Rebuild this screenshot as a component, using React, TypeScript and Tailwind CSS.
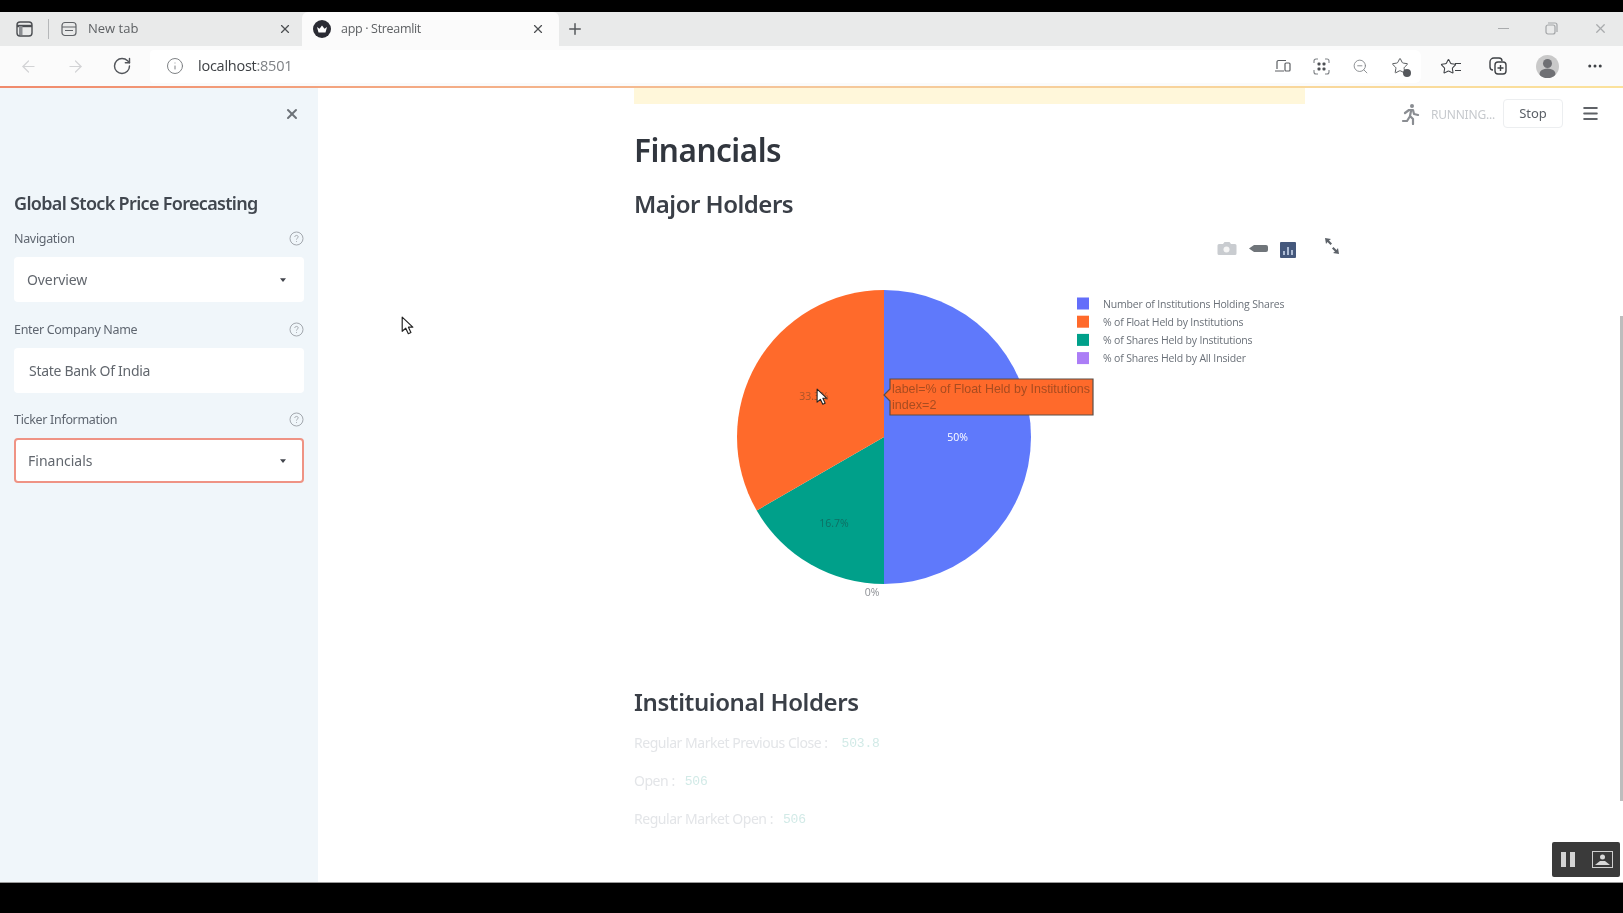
import React from "react";
import { X, Plus, ArrowLeft, ArrowRight, RotateCw, Info, ZoomOut, MoreHorizontal, Menu, Star } from "lucide-react";

const sans = "font-['Noto_Sans','Open_Sans',sans-serif]";

function Help() {
  return (
    <svg width="15" height="15" viewBox="0 0 15 15" fill="none" stroke="#a3a8ae" strokeWidth="1">
      <circle cx="7.5" cy="7.5" r="6.5" />
      <path d="M5.8 6c0-1 .8-1.6 1.7-1.6S9.2 5 9.2 5.9c0 1.2-1.7 1.3-1.7 2.6M7.5 10v.8" />
    </svg>
  );
}

function Caret() {
  return (
    <svg width="6" height="4" viewBox="0 0 8 5" className="shrink-0">
      <path d="M0 0h8L4 5z" fill="#42454c" />
    </svg>
  );
}

function Label({ text }: { text: string }) {
  return (
    <div className="flex items-center justify-between h-5">
      <span className="relative top-[1px] text-[12.5px] text-[#5f6670] tracking-[-0.32px]">{text}</span>
      <Help />
    </div>
  );
}

function Cursor({ className, size }: { className: string; size: number }) {
  return (
    <svg className={className} width={size} height={size * 1.45} viewBox="0 0 11 16">
      <path d="M1 1v12l3-2.6L6.2 15l2.2-1-2.1-4.5H10z" fill="#fff" stroke="#222" strokeWidth="1" strokeLinejoin="round" />
    </svg>
  );
}

function Chart() {
  const legend = [
    ["#636efa", "Number of Institutions Holding Shares"],
    ["#ff6a2b", "% of Float Held by Institutions"],
    ["#00a08a", "% of Shares Held by Institutions"],
    ["#ab7df6", "% of Shares Held by All Insider"],
  ];
  return (
    <svg width="720" height="400" viewBox="0 0 720 400" className="mt-2 block">
      <path d="M250 207V60A147 147 0 0 1 250 354Z" fill="#5f79fb" />
      <path d="M250 207V354A147 147 0 0 1 122.7 280.5Z" fill="#00a08a" />
      <path d="M250 207L122.7 280.5A147 147 0 0 1 250 60Z" fill="#ff6a2b" />
      <g fontFamily="'Open Sans',sans-serif" fontSize="10.5" textAnchor="middle">
        <text x="323.500" y="211" fill="#ffffff">50%</text>
        <text x="200" y="296.500" fill="#0e6f64">16.7%</text>
        <text x="180" y="170" fill="#a8542a">33.3%</text>
        <text x="238" y="366" fill="#8c8f94">0%</text>
      </g>
      {legend.map(([c, t], i) => (
        <g key={t}>
          <rect x="443" y={67.500 + i * 18.2} width="12" height="12" fill={c} />
          <text x="469" y={77.500 + i * 18.2} fontFamily="'Open Sans',sans-serif" fontSize="10.5" letterSpacing="-0.17" fill="#6a7078">{t}</text>
        </g>
      ))}
      {/* tooltip */}
      <path d="M256 149H459V185H256V171L250 165L256 159Z" fill="#ff6a2b" stroke="#5c4e46" strokeWidth="1.200" />
      <g fontFamily="'Liberation Sans',sans-serif" fontSize="12.6" fill="#a94c20">
        <text x="258" y="163" textLength="198" lengthAdjust="spacingAndGlyphs">label=% of Float Held by Institutions</text>
        <text x="258" y="179">index=2</text>
      </g>
      {/* modebar */}
      <g fill="#c9ccd0">
        <path d="M586 14h4l1.500-2h5l1.500 2h4a1.500 1.500 0 0 1 1.500 1.500v8a1.500 1.500 0 0 1-1.500 1.500h-16a1.500 1.500 0 0 1-1.500-1.500v-8a1.500 1.500 0 0 1 1.500-1.500z" transform="translate(-1 0)" />
        <circle cx="592.500" cy="19.500" r="3" fill="#f5f5f5" />
      </g>
      <path d="M620 15h12a2 2 0 0 1 2 2v3a2 2 0 0 1-2 2h-12l-5-3.500z" fill="#70757a" />
      <rect x="646" y="12" width="16" height="16" rx="1" fill="#45587c" />
      <path d="M649 25v-4h2v4zM653 25v-8h2v8zM657 25v-5h2v5z" fill="#aebcd4" />
      <path d="M691 8l6 1-2 1.500 3 3-1.500 1.500-3-3L692 14zM705 24l-6-1 2-1.500-3-3 1.500-1.500 3 3 1.500-2z" fill="#5d6269" />
    </svg>
  );
}

function Info2() {
  return (
    <div className="mt-[12px] flex flex-col gap-[16px] text-[14px] leading-[22px] text-[#e3e5e8] tracking-[-0.46px]">
      {[
        ["Regular Market Previous Close :", "503.8", "gap-[14px]"],
        ["Open :", "506", "gap-[10px]"],
        ["Regular Market Open :", "506", "gap-[10px]"],
      ].map(([a, b, g]) => (
        <div key={a} className={`flex items-center ${g}`}>
          <span>{a}</span>
          <span className="relative top-[1px] font-['Liberation_Mono',monospace] text-[13px] tracking-[-0.2px] text-[#d2eae7]">{b}</span>
        </div>
      ))}
    </div>
  );
}

export default function App() {
  return (
    <div className={`relative flex h-screen w-full flex-col overflow-hidden bg-black blur-[0.6px] ${sans}`}>
      <div className="h-3 shrink-0 bg-black" />

      {/* tab strip */}
      <div className="flex h-[34px] shrink-0 items-stretch bg-[#e9eaea] font-['Open_Sans',sans-serif]">
        <div className="flex w-[48px] items-center justify-center">
          <svg width="17" height="16" viewBox="0 0 17 16" fill="none" stroke="#4b4e52" strokeWidth="1.4">
            <rect x="1" y="1" width="15" height="14" rx="3" />
            <path d="M1 5h15" strokeWidth="2.4" />
            <rect x="3" y="5" width="3.500" height="9" fill="#8b8e92" stroke="none" />
          </svg>
        </div>
        <div className="my-[7px] w-px bg-[#b5b7b9]" />
        <div className="flex w-[253px] items-center pl-[12px] pr-[10px] text-[13px] text-[#5e6164]">
          <svg width="16" height="16" viewBox="0 0 16 16" fill="none" stroke="#606367" strokeWidth="1.200" className="mr-[11px]">
            <rect x="1" y="1.500" width="14" height="13" rx="3" />
            <path d="M1 6h14M4 9.500h8" />
          </svg>
          <span className="flex-1">New tab</span>
          <X size={14} color="#4c4f52" />
        </div>
        <div className="flex w-[257px] items-center rounded-t-[6px] bg-[#fbfbfb] pl-[11px] pr-[14px] text-[12.500px] tracking-[-0.32px] text-[#5e6164]">
          <svg width="18" height="18" viewBox="0 0 18 18" className="mr-[10px]">
            <circle cx="9" cy="9" r="9" fill="#2a2b33" />
            <path d="M4 7l2.500 1.800L9 5.500l2.500 3.300L14 7l-1.500 5.500h-7z" fill="#fff" />
          </svg>
          <span className="flex-1">app · Streamlit</span>
          <X size={14} color="#4c4f52" />
        </div>
        <div className="flex w-[32px] items-center justify-center">
          <Plus size={18} color="#55585b" />
        </div>
        <div className="flex-1" />
        <div className="flex w-[155px] items-center justify-between pr-[15px] pb-[1px] text-[#a3a5a7]">
          <div className="ml-[30px] h-[1.500px] w-[11px] bg-[#a9abad]" />
          <svg width="13" height="13" viewBox="0 0 13 13" fill="none" stroke="#a3a5a7" strokeWidth="1.200">
            <rect x="1" y="3" width="9" height="9" rx="2" />
            <path d="M3 1h7a2 2 0 0 1 2 2v7" />
          </svg>
          <X size={15} color="#a9abad" />
        </div>
      </div>

      {/* toolbar */}
      <div className="flex h-[40px] shrink-0 items-center bg-[#fbfbfb] font-['Open_Sans',sans-serif]">
        <div className="flex w-[150px] items-center pl-[19px]">
          <ArrowLeft size={19} color="#d2d3d5" strokeWidth={1.500} />
          <ArrowRight size={19} color="#d2d3d5" strokeWidth={1.500} className="ml-[28px]" />
          <RotateCw size={20} color="#52555a" strokeWidth={1.700} className="ml-[27px]" />
        </div>
        <div className="flex h-[33px] w-[1271px] items-center rounded-l-[4px] rounded-r-[6px] bg-white pl-[16px] pr-[12px]">
          <Info size={18} color="#7b7e82" strokeWidth={1.300} />
          <span className="ml-[14px] flex-1 text-[14.500px] tracking-[-0.25px] text-[#3d4044]">
            localhost<span className="text-[#7e8185]">:8501</span>
          </span>
          <div className="flex items-center gap-[22px]">
            <svg width="17" height="14" viewBox="0 0 17 14" fill="none" stroke="#5c5f63" strokeWidth="1.200">
              <path d="M3 10V3a1.500 1.500 0 0 1 1.500-1.500H12M1 12h9" />
              <rect x="11" y="4" width="5" height="8" rx="1" />
            </svg>
            <svg width="17" height="17" viewBox="0 0 17 17" fill="none" stroke="#7e8286" strokeWidth="1.100">
              <path d="M1 5V3a2 2 0 0 1 2-2h2M12 1h2a2 2 0 0 1 2 2v2M16 12v2a2 2 0 0 1-2 2h-2M5 16H3a2 2 0 0 1-2-2v-2" />
              <rect x="4.500" y="4.500" width="3" height="3" rx="1" fill="#4e5155" stroke="none" />
              <rect x="9.500" y="4.500" width="3" height="3" rx="1" fill="#4e5155" stroke="none" />
              <rect x="4.500" y="9.500" width="3" height="3" rx="1" fill="#4e5155" stroke="none" />
              <rect x="9.500" y="9.500" width="3" height="3" rx="1" fill="#4e5155" stroke="none" />
            </svg>
            <ZoomOut size={17} color="#85888c" strokeWidth={1.300} />
            <div className="relative">
              <Star size={18} color="#55585c" strokeWidth={1.300} />
              <div className="absolute -bottom-[2px] -right-[2px] h-[8px] w-[8px] rounded-full bg-[#55585c]" />
            </div>
          </div>
        </div>
        <div className="flex flex-1 items-center pl-[19px] pr-[19px]">
          <div className="relative">
            <Star size={17} color="#3e4145" strokeWidth={1.500} />
            <div className="absolute bottom-[4px] -right-[4px] h-[8px] w-[6px] border-y-[1.500px] border-[#3e4145]" />
          </div>
          <svg width="18" height="18" viewBox="0 0 18 18" fill="none" stroke="#3e4145" strokeWidth="1.400" className="ml-[32px]">
            <rect x="6" y="5" width="11" height="12" rx="3" />
            <path d="M4 13a3 3 0 0 1-3-3V5a4 4 0 0 1 4-4h5a3 3 0 0 1 3 3M11.500 8v6M8.500 11h6" />
          </svg>
          <div className="ml-[29px] flex h-[23px] w-[23px] items-center justify-center overflow-hidden rounded-full bg-[#c9c9c9]">
            <svg width="23" height="23" viewBox="0 0 23 23">
              <circle cx="11.500" cy="8.500" r="4.500" fill="#6f7074" />
              <ellipse cx="11.500" cy="19" rx="8" ry="5.500" fill="#6f7074" />
            </svg>
          </div>
          <MoreHorizontal size={18} color="#3e4145" className="ml-auto" />
        </div>
      </div>

      {/* loading line */}
      <div className="h-[2px] shrink-0 bg-gradient-to-r from-[#f08a6c] via-[#f5c79a] to-[#fbe29c]" />

      {/* page */}
      <div className="flex h-[794px] shrink-0 bg-white">
        <aside className="flex w-[318px] shrink-0 flex-col bg-[#f0f6fa] pl-[14px] pr-[14px]">
          <div className="mt-[18px] flex h-[14px] justify-end pr-[4px]">
            <X size={16} color="#6d7278" strokeWidth={3} />
          </div>
          <h2 className="mt-[69px] text-[18px] font-semibold leading-7 tracking-[-0.68px] text-[#41474f]">Global Stock Price Forecasting</h2>
          <div className="mt-[11px]"><Label text="Navigation" /></div>
          <div className="mt-[9px] flex h-[45px] items-center justify-between rounded bg-white pl-[13px] pr-[18px] text-[14px] text-[#62676e]">
            <span className="tracking-[-0.1px]">Overview</span>
            <Caret />
          </div>
          <div className="mt-[17px]"><Label text="Enter Company Name" /></div>
          <div className="mt-[9px] flex h-[45px] items-center rounded bg-white pl-[15px] text-[14px] tracking-[-0.3px] text-[#62676e]">State Bank Of India</div>
          <div className="mt-[16px]"><Label text="Ticker Information" /></div>
          <div className="mt-[9px] flex h-[45px] items-center justify-between rounded border-2 border-[#ef9384] bg-white pl-[12px] pr-[16px] text-[14px] text-[#62676e]">
            <span>Financials</span>
            <Caret />
          </div>
        </aside>

        <main className="relative flex-1 pl-[316px]">
          <div className="h-[16px] w-[671px] bg-[#fff7da]" />
          <h1 className="mt-[24px] text-[31.500px] font-semibold leading-[44px] tracking-[-0.5px] text-[#31363e]">Financials</h1>
          <h2 className="mt-[14px] text-[24px] font-semibold leading-9 tracking-[-0.5px] text-[#3a3f47]">Major Holders</h2>
          <Chart />
          <h2 className="mt-[54px] text-[24px] font-semibold leading-9 tracking-[-0.4px] text-[#3a3f47]">Instituional Holders</h2>
          <Info2 />

          {/* streamlit status */}
          <div className="absolute right-[60px] top-[11px] flex h-[29px] items-center">
            <svg width="20" height="22" viewBox="0 0 20 22" className="mr-[10px]" fill="none" stroke="#8a8d92" strokeWidth="2.200" strokeLinecap="round" strokeLinejoin="round">
              <circle cx="11" cy="3" r="2" fill="#8a8d92" stroke="none" />
              <path d="M4 10l4-3h4l1 4 4 1M10 8l-1 5 3 3v5M8.500 14L6 18H2" />
            </svg>
            <span className="relative top-[1px] mr-[8px] text-[12px] tracking-[-0.2px] text-[#c6c9cd]">RUNNING...</span>
            <div className="flex h-[29px] w-[60px] items-center justify-center rounded border border-[#eceef0] text-[13px] text-[#5a5f66]">Stop</div>
          </div>
          <div className="absolute right-[23px] top-[16px]">
            <Menu size={19} color="#5f6267" strokeWidth={2.400} />
          </div>
          {/* scrollbar */}
          <div className="absolute right-0 top-[228px] h-[485px] w-[3px] bg-[#bdbdbd]" />
        </main>
      </div>

      {/* footer band */}
      <div className="h-px shrink-0 bg-[#9a9a9a]" />
      <div className="flex-1 bg-black" />

      {/* overlays */}
      <Cursor className="absolute left-[401px] top-[316px]" size={13} />
      <Cursor className="absolute left-[816px] top-[388px]" size={12} />
      <div className="absolute left-[1552px] top-[842px] flex h-[35px] w-[68px] items-center justify-between rounded-[2px] bg-[#3a3a3a] pl-[9px] pr-[7px]">
        <div className="flex gap-[4px]">
          <div className="h-[15px] w-[5px] bg-[#d4d4d4]" />
          <div className="h-[15px] w-[5px] bg-[#d4d4d4]" />
        </div>
        <svg width="21" height="17" viewBox="0 0 21 17" fill="none">
          <rect x="0.500" y="0.500" width="20" height="16" stroke="#cfcfcf" />
          <circle cx="10.500" cy="6" r="2.500" fill="#d8d8d8" />
          <path d="M3 14l5-4h5l5 4z" fill="#d8d8d8" />
        </svg>
      </div>
    </div>
  );
}
